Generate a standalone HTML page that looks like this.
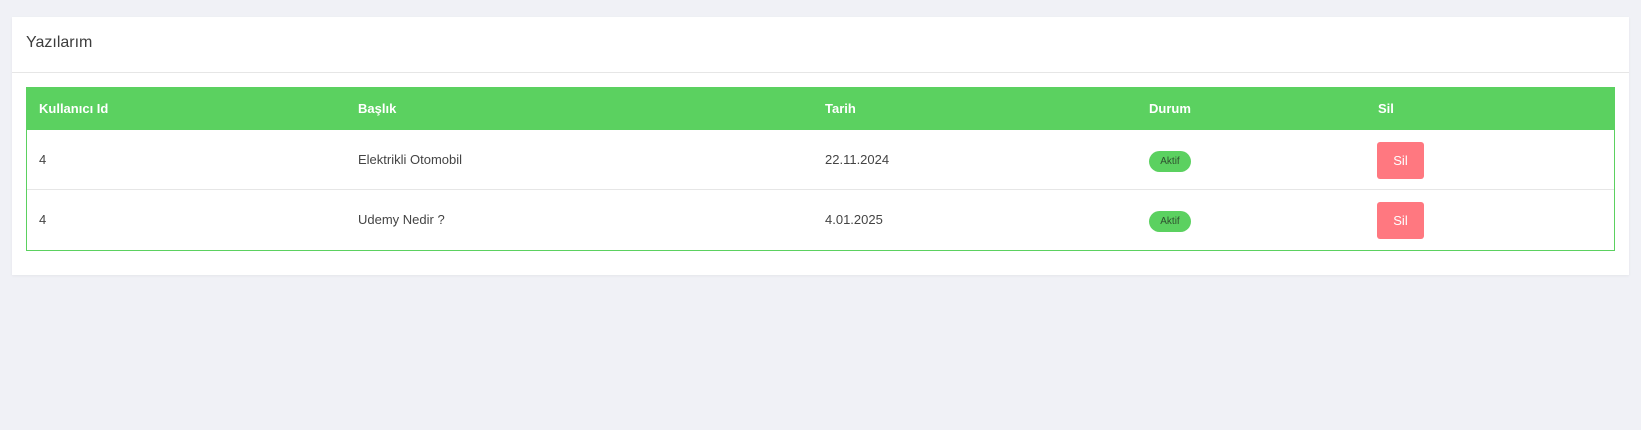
<!DOCTYPE html>
<html><head><style>
body{margin:0;background:#f0f1f6;font-family:"Liberation Sans",sans-serif;width:1641px;height:430px;overflow:hidden;position:relative}
.card{position:absolute;left:12px;top:17px;width:1617px;height:258px;background:#fff;box-shadow:0 1px 3px rgba(0,0,0,.05)}
.title{position:absolute;left:14px;top:17px;font-size:16px;color:#3d3d3d}
.hr{position:absolute;left:0;right:0;top:55px;border-top:1px solid #e6e6e6}
.tbl{position:absolute;left:14px;top:70px;width:1587px;height:163px;border:1px solid #5bd160;border-top:none}
.head{position:absolute;left:-1px;top:0;width:1589px;height:43px;background:#5bd160}
.c{position:absolute;font-size:13px}
.h{color:#fff;font-weight:bold;top:14px}
.row{position:absolute;left:0;width:1587px;height:60px}
.row .c{color:#444;top:22px}
.badge{position:absolute;left:1122px;top:21px;width:42px;height:21px;border-radius:11px;background:#5bd160;color:#2f4f2f;font-size:10px;display:flex;align-items:center;justify-content:center}
.btn{position:absolute;left:1350px;top:12px;width:47px;height:37px;border-radius:3px;background:#ff7880;color:#fff;font-size:13px;display:flex;align-items:center;justify-content:center}
</style></head><body>
<div class="card">
<div class="title">Yazılarım</div>
<div class="hr"></div>
<div class="tbl">
<div class="head">
<div class="c h" style="left:13px">Kullanıcı Id</div>
<div class="c h" style="left:332px">Başlık</div>
<div class="c h" style="left:799px">Tarih</div>
<div class="c h" style="left:1123px">Durum</div>
<div class="c h" style="left:1352px">Sil</div>
</div>
<div class="row" style="top:43px;border-bottom:1px solid #e6e6e6;height:59px">
<div class="c" style="left:12px">4</div><div class="c" style="left:331px">Elektrikli Otomobil</div><div class="c" style="left:798px">22.11.2024</div>
<div class="badge">Aktif</div><div class="btn">Sil</div></div>
<div class="row" style="top:103px">
<div class="c" style="left:12px">4</div><div class="c" style="left:331px">Udemy Nedir ?</div><div class="c" style="left:798px">4.01.2025</div>
<div class="badge">Aktif</div><div class="btn">Sil</div></div>
</div>
</div>
</body></html>
